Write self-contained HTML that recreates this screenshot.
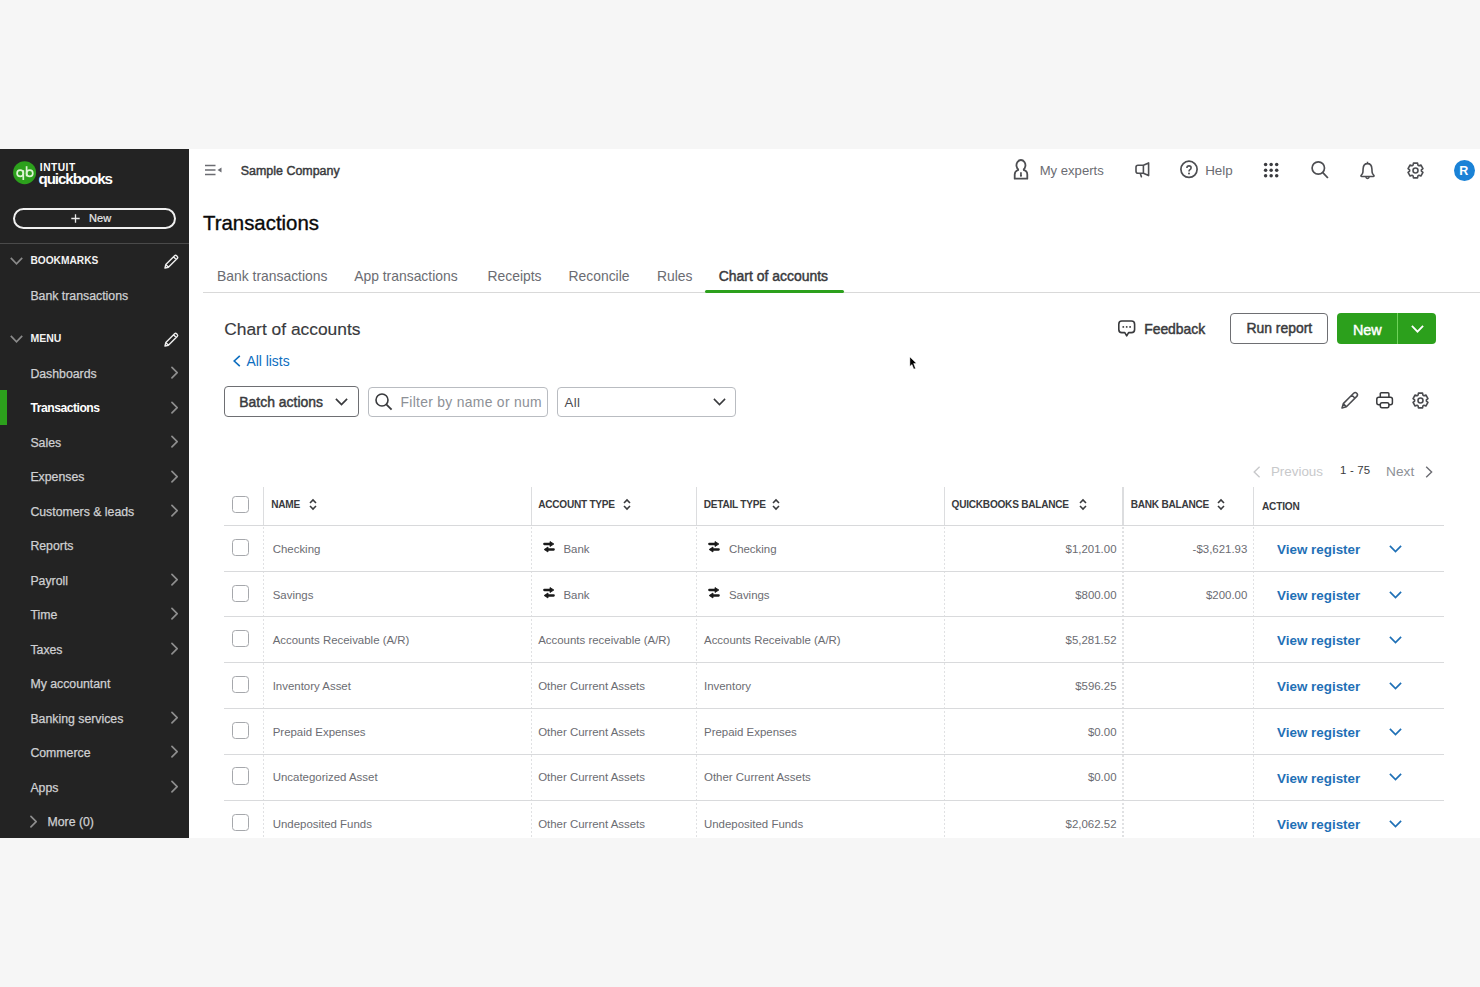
<!DOCTYPE html><html><head><meta charset="utf-8"><style>
*{margin:0;padding:0;box-sizing:border-box}
html,body{width:1480px;height:987px;overflow:hidden;background:#f6f6f6;font-family:"Liberation Sans",sans-serif}
.a{position:absolute;white-space:nowrap}
svg{position:absolute;overflow:visible}
</style></head><body>
<div class="a" style="left:0;top:148.8px;width:1480px;height:689.2px;background:#fff"></div>
<div class="a" style="left:0;top:149px;width:189px;height:689px;background:#232323"></div>
<svg style="left:0;top:0" width="1" height="1"></svg>
<svg style="left:13px;top:161px" width="24" height="24" viewBox="0 0 24 24">
<circle cx="11.6" cy="11.7" r="11.5" fill="#2ca01c"/>
<circle cx="7.2" cy="12.3" r="3.1" fill="none" stroke="#dcf3d2" stroke-width="1.7"/><path d="M10.3 9.3 V19" stroke="#dcf3d2" stroke-width="1.7"/>
<circle cx="16.7" cy="12.3" r="3.1" fill="none" stroke="#dcf3d2" stroke-width="1.7"/><path d="M13.6 5.2 V15.3" stroke="#dcf3d2" stroke-width="1.7"/>
</svg>
<div class="a" style="left:39.80px;top:162.77px;font-size:10.2px;line-height:10.2px;font-weight:700;color:#fff;letter-spacing:0.5px;">INTUIT</div>
<div class="a" style="left:38.50px;top:171.13px;font-size:15.2px;line-height:15.2px;font-weight:700;color:#fff;letter-spacing:-1.1px;">quickbooks</div>
<div class="a" style="left:13px;top:208px;width:163px;height:21px;border:2px solid #f0f0f0;border-radius:11px"></div>
<svg style="left:71px;top:213.8px" width="9" height="9" viewBox="0 0 9 9"><path d="M4.5 0.3V8.7M0.3 4.5H8.7" stroke="#e8e8e8" stroke-width="1.3"/></svg>
<div class="a" style="left:89.00px;top:213.49px;font-size:11px;line-height:11px;font-weight:400;color:#e8e8e8;letter-spacing:0.1px;-webkit-text-stroke:0.2px #e8e8e8;">New</div>
<div class="a" style="left:0;top:242.5px;width:189px;height:1.5px;background:#4a4a4a"></div>
<svg style="left:10.2px;top:257px" width="13" height="8" viewBox="0 0 13 8"><path d="M0.8 0.8 L6.5 6.8 L12.2 0.8" fill="none" stroke="#8a8a8a" stroke-width="1.7"/></svg>
<div class="a" style="left:30.40px;top:255.97px;font-size:10.2px;line-height:10.2px;font-weight:700;color:#f2f2f2;letter-spacing:0px;">BOOKMARKS</div>
<svg style="left:164px;top:253.5px" width="15" height="15" viewBox="0 0 15 15"><path d="M1 14 L1.8 10.6 L10.6 1.8 Q11.6 0.8 12.6 1.8 L13.2 2.4 Q14.2 3.4 13.2 4.4 L4.4 13.2 Z M9.6 2.8 L12.2 5.4 M1.8 10.6 L4.4 13.2" fill="none" stroke="#eee" stroke-width="1.4" stroke-linejoin="round"/></svg>
<div class="a" style="left:30.40px;top:289.89px;font-size:12.3px;line-height:12.3px;font-weight:400;color:#cfd0d2;letter-spacing:0px;-webkit-text-stroke:0.25px #cfd0d2;">Bank transactions</div>
<svg style="left:10.2px;top:335px" width="13" height="8" viewBox="0 0 13 8"><path d="M0.8 0.8 L6.5 6.8 L12.2 0.8" fill="none" stroke="#8a8a8a" stroke-width="1.7"/></svg>
<div class="a" style="left:30.40px;top:333.41px;font-size:10.5px;line-height:10.5px;font-weight:700;color:#f2f2f2;letter-spacing:0px;">MENU</div>
<svg style="left:164px;top:331.5px" width="15" height="15" viewBox="0 0 15 15"><path d="M1 14 L1.8 10.6 L10.6 1.8 Q11.6 0.8 12.6 1.8 L13.2 2.4 Q14.2 3.4 13.2 4.4 L4.4 13.2 Z M9.6 2.8 L12.2 5.4 M1.8 10.6 L4.4 13.2" fill="none" stroke="#eee" stroke-width="1.4" stroke-linejoin="round"/></svg>
<div class="a" style="left:30.40px;top:367.79px;font-size:12.3px;line-height:12.3px;font-weight:400;color:#cfd0d2;letter-spacing:0px;-webkit-text-stroke:0.25px #cfd0d2;">Dashboards</div>
<svg style="left:171.4px;top:366.09999999999997px" width="7.5" height="13" viewBox="0 0 8 13"><path d="M1 1 L6.6 6.6 L1 12.2" fill="none" stroke="#8e8e8e" stroke-width="1.8" stroke-linecap="round" stroke-linejoin="round"/></svg>
<div class="a" style="left:0;top:390.3px;width:6.8px;height:34.4px;background:#2ca01c"></div>
<div class="a" style="left:30.40px;top:402.35px;font-size:12.2px;line-height:12.2px;font-weight:700;color:#ffffff;letter-spacing:-0.5px;">Transactions</div>
<svg style="left:171.4px;top:400.58px" width="7.5" height="13" viewBox="0 0 8 13"><path d="M1 1 L6.6 6.6 L1 12.2" fill="none" stroke="#8e8e8e" stroke-width="1.8" stroke-linecap="round" stroke-linejoin="round"/></svg>
<div class="a" style="left:30.40px;top:436.75px;font-size:12.3px;line-height:12.3px;font-weight:400;color:#cfd0d2;letter-spacing:0px;-webkit-text-stroke:0.25px #cfd0d2;">Sales</div>
<svg style="left:171.4px;top:435.05999999999995px" width="7.5" height="13" viewBox="0 0 8 13"><path d="M1 1 L6.6 6.6 L1 12.2" fill="none" stroke="#8e8e8e" stroke-width="1.8" stroke-linecap="round" stroke-linejoin="round"/></svg>
<div class="a" style="left:30.40px;top:471.23px;font-size:12.3px;line-height:12.3px;font-weight:400;color:#cfd0d2;letter-spacing:0px;-webkit-text-stroke:0.25px #cfd0d2;">Expenses</div>
<svg style="left:171.4px;top:469.53999999999996px" width="7.5" height="13" viewBox="0 0 8 13"><path d="M1 1 L6.6 6.6 L1 12.2" fill="none" stroke="#8e8e8e" stroke-width="1.8" stroke-linecap="round" stroke-linejoin="round"/></svg>
<div class="a" style="left:30.40px;top:505.71px;font-size:12.3px;line-height:12.3px;font-weight:400;color:#cfd0d2;letter-spacing:0px;-webkit-text-stroke:0.25px #cfd0d2;">Customers &amp; leads</div>
<svg style="left:171.4px;top:504.02px" width="7.5" height="13" viewBox="0 0 8 13"><path d="M1 1 L6.6 6.6 L1 12.2" fill="none" stroke="#8e8e8e" stroke-width="1.8" stroke-linecap="round" stroke-linejoin="round"/></svg>
<div class="a" style="left:30.40px;top:540.19px;font-size:12.3px;line-height:12.3px;font-weight:400;color:#cfd0d2;letter-spacing:0px;-webkit-text-stroke:0.25px #cfd0d2;">Reports</div>
<div class="a" style="left:30.40px;top:574.67px;font-size:12.3px;line-height:12.3px;font-weight:400;color:#cfd0d2;letter-spacing:0px;-webkit-text-stroke:0.25px #cfd0d2;">Payroll</div>
<svg style="left:171.4px;top:572.9799999999999px" width="7.5" height="13" viewBox="0 0 8 13"><path d="M1 1 L6.6 6.6 L1 12.2" fill="none" stroke="#8e8e8e" stroke-width="1.8" stroke-linecap="round" stroke-linejoin="round"/></svg>
<div class="a" style="left:30.40px;top:609.15px;font-size:12.3px;line-height:12.3px;font-weight:400;color:#cfd0d2;letter-spacing:0px;-webkit-text-stroke:0.25px #cfd0d2;">Time</div>
<svg style="left:171.4px;top:607.4599999999999px" width="7.5" height="13" viewBox="0 0 8 13"><path d="M1 1 L6.6 6.6 L1 12.2" fill="none" stroke="#8e8e8e" stroke-width="1.8" stroke-linecap="round" stroke-linejoin="round"/></svg>
<div class="a" style="left:30.40px;top:643.63px;font-size:12.3px;line-height:12.3px;font-weight:400;color:#cfd0d2;letter-spacing:0px;-webkit-text-stroke:0.25px #cfd0d2;">Taxes</div>
<svg style="left:171.4px;top:641.9399999999999px" width="7.5" height="13" viewBox="0 0 8 13"><path d="M1 1 L6.6 6.6 L1 12.2" fill="none" stroke="#8e8e8e" stroke-width="1.8" stroke-linecap="round" stroke-linejoin="round"/></svg>
<div class="a" style="left:30.40px;top:678.11px;font-size:12.3px;line-height:12.3px;font-weight:400;color:#cfd0d2;letter-spacing:0px;-webkit-text-stroke:0.25px #cfd0d2;">My accountant</div>
<div class="a" style="left:30.40px;top:712.59px;font-size:12.3px;line-height:12.3px;font-weight:400;color:#cfd0d2;letter-spacing:0px;-webkit-text-stroke:0.25px #cfd0d2;">Banking services</div>
<svg style="left:171.4px;top:710.9px" width="7.5" height="13" viewBox="0 0 8 13"><path d="M1 1 L6.6 6.6 L1 12.2" fill="none" stroke="#8e8e8e" stroke-width="1.8" stroke-linecap="round" stroke-linejoin="round"/></svg>
<div class="a" style="left:30.40px;top:747.07px;font-size:12.3px;line-height:12.3px;font-weight:400;color:#cfd0d2;letter-spacing:0px;-webkit-text-stroke:0.25px #cfd0d2;">Commerce</div>
<svg style="left:171.4px;top:745.38px" width="7.5" height="13" viewBox="0 0 8 13"><path d="M1 1 L6.6 6.6 L1 12.2" fill="none" stroke="#8e8e8e" stroke-width="1.8" stroke-linecap="round" stroke-linejoin="round"/></svg>
<div class="a" style="left:30.40px;top:781.55px;font-size:12.3px;line-height:12.3px;font-weight:400;color:#cfd0d2;letter-spacing:0px;-webkit-text-stroke:0.25px #cfd0d2;">Apps</div>
<svg style="left:171.4px;top:779.86px" width="7.5" height="13" viewBox="0 0 8 13"><path d="M1 1 L6.6 6.6 L1 12.2" fill="none" stroke="#8e8e8e" stroke-width="1.8" stroke-linecap="round" stroke-linejoin="round"/></svg>
<svg style="left:30.2px;top:815.3px" width="7.5" height="13" viewBox="0 0 8 13"><path d="M1 1 L6.6 6.6 L1 12.2" fill="none" stroke="#8e8e8e" stroke-width="1.8" stroke-linecap="round" stroke-linejoin="round"/></svg>
<div class="a" style="left:47.50px;top:815.99px;font-size:12.3px;line-height:12.3px;font-weight:400;color:#cfd0d2;letter-spacing:0px;-webkit-text-stroke:0.25px #cfd0d2;">More (0)</div>
<svg style="left:205px;top:164px" width="17" height="13" viewBox="0 0 17 13">
<path d="M0 1.5H10.5M0 6H10.5M0 10.5H10.5" stroke="#6b6c72" stroke-width="1.6"/>
<path d="M16.5 3.5 L12.5 6 L16.5 8.5 Z" fill="#6b6c72"/></svg>
<div class="a" style="left:240.80px;top:164.86px;font-size:12.45px;line-height:12.45px;font-weight:400;color:#393a3d;letter-spacing:0px;-webkit-text-stroke:0.45px #393a3d;">Sample Company</div>
<svg style="left:1013px;top:158px" width="16" height="22" viewBox="0 0 16 22">
<path d="M5.7 11.9 A4.5 5.3 0 1 1 10.2 11.9" fill="none" stroke="#4d4e52" stroke-width="1.8"/>
<path d="M5.7 11.9 Q1.7 12.8 1.7 16.4 V20.7 H14.3 V16.4 Q14.3 12.8 10.2 11.9" fill="none" stroke="#4d4e52" stroke-width="1.8" stroke-linejoin="round"/>
<path d="M7.95 14.3 V18.6" stroke="#4d4e52" stroke-width="1.7"/><path d="M6.8 17 L7.95 18.9 L9.1 17 Z" fill="#4d4e52"/></svg>
<div class="a" style="left:1039.70px;top:163.91px;font-size:13.1px;line-height:13.1px;font-weight:400;color:#6b6c72;letter-spacing:0px;">My experts</div>
<svg style="left:1135px;top:162px" width="15" height="16" viewBox="0 0 15 16">
<path d="M8.4 3.3 H3 Q1 3.3 1 5.3 V9.2 Q1 11.2 3 11.2 H8.4 Z M8.4 3.3 L13.6 0.9 V13.6 L8.4 11.2 M5.3 11.4 L6.4 14.8" fill="none" stroke="#4d4e52" stroke-width="1.6" stroke-linejoin="round" stroke-linecap="round"/></svg>
<svg style="left:1180px;top:160.5px" width="18" height="18" viewBox="0 0 18 18">
<circle cx="9" cy="8.3" r="8.1" fill="none" stroke="#4d4e52" stroke-width="1.7"/>
<path d="M6.9 7.1 Q6.9 4.9 9 4.9 Q11.1 4.9 11.1 6.8 Q11.1 8 10 8.6 Q9 9.2 9 10.4" fill="none" stroke="#4d4e52" stroke-width="1.6"/>
<circle cx="9" cy="12.4" r="1" fill="#4d4e52"/></svg>
<div class="a" style="left:1205.20px;top:163.66px;font-size:13.4px;line-height:13.4px;font-weight:400;color:#6b6c72;letter-spacing:0px;">Help</div>
<svg style="left:1264px;top:163px" width="15" height="15" viewBox="0 0 15 15"><circle cx="1.60" cy="1.60" r="1.75" fill="#3a3b3f"/><circle cx="7.15" cy="1.60" r="1.75" fill="#3a3b3f"/><circle cx="12.70" cy="1.60" r="1.75" fill="#3a3b3f"/><circle cx="1.60" cy="7.15" r="1.75" fill="#3a3b3f"/><circle cx="7.15" cy="7.15" r="1.75" fill="#3a3b3f"/><circle cx="12.70" cy="7.15" r="1.75" fill="#3a3b3f"/><circle cx="1.60" cy="12.70" r="1.75" fill="#3a3b3f"/><circle cx="7.15" cy="12.70" r="1.75" fill="#3a3b3f"/><circle cx="12.70" cy="12.70" r="1.75" fill="#3a3b3f"/></svg>
<svg style="left:1310.5px;top:160.8px" width="18" height="18" viewBox="0 0 18 18">
<circle cx="7.3" cy="7" r="6.2" fill="none" stroke="#4d4e52" stroke-width="1.7"/>
<path d="M11.6 11.4 L16.9 17" stroke="#4d4e52" stroke-width="1.8"/></svg>
<svg style="left:1360px;top:160.5px" width="16" height="19" viewBox="0 0 16 19">
<path d="M7.5 0.8 V2.6 M7.5 2.6 Q11.6 2.6 11.9 7.8 L12.1 11.2 Q12.3 13.2 13.9 14.3 Q14.4 15.5 13.2 15.5 H1.8 Q0.6 15.5 1.1 14.3 Q2.7 13.2 2.9 11.2 L3.1 7.8 Q3.4 2.6 7.5 2.6 Z" fill="none" stroke="#4d4e52" stroke-width="1.6" stroke-linejoin="round"/>
<path d="M5.7 16.1 Q7.5 19 9.3 16.1" fill="none" stroke="#4d4e52" stroke-width="1.6"/></svg>
<svg style="left:1407.2px;top:161.7px" width="17" height="17" viewBox="0 0 17 17"><path d="M6.09 3.11 L6.45 1.08 L10.55 1.08 L10.91 3.11 L11.96 3.72 L13.90 3.01 L15.95 6.57 L14.37 7.89 L14.37 9.11 L15.95 10.43 L13.90 13.99 L11.96 13.28 L10.91 13.89 L10.55 15.92 L6.45 15.92 L6.09 13.89 L5.04 13.28 L3.10 13.99 L1.05 10.43 L2.63 9.11 L2.63 7.89 L1.05 6.57 L3.10 3.01 L5.04 3.72 Z" fill="none" stroke="#4d4e52" stroke-width="1.6" stroke-linejoin="round"/><circle cx="8.5" cy="8.5" r="2.5" fill="none" stroke="#4d4e52" stroke-width="1.6"/></svg>
<div class="a" style="left:1453.5px;top:159.5px;width:21px;height:21px;border-radius:50%;background:#1a82d6"></div>
<div class="a" style="left:1459.20px;top:164.92px;font-size:12.5px;line-height:12.5px;font-weight:700;color:#fff;letter-spacing:0px;">R</div>
<div class="a" style="left:203.00px;top:213.13px;font-size:20.4px;line-height:20.4px;font-weight:400;color:#0a0a0a;letter-spacing:0px;-webkit-text-stroke:0.35px #0a0a0a;">Transactions</div>
<div class="a" style="left:203px;top:291.5px;width:1277px;height:1.5px;background:#d9d9d9"></div>
<div class="a" style="left:217.00px;top:270.43px;font-size:13.9px;line-height:13.9px;font-weight:400;color:#6b6c72;letter-spacing:0px;">Bank transactions</div>
<div class="a" style="left:354.20px;top:270.43px;font-size:13.9px;line-height:13.9px;font-weight:400;color:#6b6c72;letter-spacing:0px;">App transactions</div>
<div class="a" style="left:487.50px;top:270.43px;font-size:13.9px;line-height:13.9px;font-weight:400;color:#6b6c72;letter-spacing:0px;">Receipts</div>
<div class="a" style="left:568.50px;top:270.43px;font-size:13.9px;line-height:13.9px;font-weight:400;color:#6b6c72;letter-spacing:0px;">Reconcile</div>
<div class="a" style="left:657.00px;top:270.43px;font-size:13.9px;line-height:13.9px;font-weight:400;color:#6b6c72;letter-spacing:0px;">Rules</div>
<div class="a" style="left:718.80px;top:269.59px;font-size:13.95px;line-height:13.95px;font-weight:400;color:#393a3d;letter-spacing:0px;-webkit-text-stroke:0.45px currentColor;">Chart of accounts</div>
<div class="a" style="left:705px;top:290px;width:138.5px;height:3px;background:#2ca01c;border-radius:1.5px"></div>
<div class="a" style="left:224.20px;top:321.17px;font-size:17.4px;line-height:17.4px;font-weight:400;color:#393a3d;letter-spacing:0px;-webkit-text-stroke:0.15px #393a3d;">Chart of accounts</div>
<svg style="left:233px;top:355px" width="8" height="12" viewBox="0 0 8 12"><path d="M6.8 0.8 L1.2 6 L6.8 11.2" fill="none" stroke="#0d6ebf" stroke-width="1.6"/></svg>
<div class="a" style="left:246.40px;top:355.43px;font-size:13.9px;line-height:13.9px;font-weight:400;color:#0d6ebf;letter-spacing:0px;">All lists</div>
<svg style="left:1117.5px;top:319.5px" width="18" height="18" viewBox="0 0 18 18">
<path d="M3.8 1 H13.4 Q16.6 1 16.6 4.2 V9.4 Q16.6 12.6 13.4 12.6 H10.6 L8.7 15.9 L6.8 12.6 H3.8 Q0.8 12.6 0.8 9.4 V4.2 Q0.8 1 3.8 1 Z" fill="none" stroke="#393a3d" stroke-width="1.6" stroke-linejoin="round"/>
<circle cx="5.3" cy="6.9" r="0.95" fill="#393a3d"/><circle cx="8.7" cy="6.9" r="0.95" fill="#393a3d"/><circle cx="12.1" cy="6.9" r="0.95" fill="#393a3d"/></svg>
<div class="a" style="left:1144.20px;top:322.53px;font-size:13.9px;line-height:13.9px;font-weight:400;color:#393a3d;letter-spacing:0px;-webkit-text-stroke:0.45px currentColor;">Feedback</div>
<div class="a" style="left:1230.4px;top:313.4px;width:97.6px;height:30.4px;border:1.8px solid #6e6f73;border-radius:4px"></div>
<div class="a" style="left:1246.40px;top:322.49px;font-size:13.95px;line-height:13.95px;font-weight:400;color:#393a3d;letter-spacing:0px;-webkit-text-stroke:0.45px currentColor;">Run report</div>
<div class="a" style="left:1337.3px;top:313.2px;width:98.5px;height:30.8px;background:#2ca01c;border-radius:4px"></div>
<div class="a" style="left:1397.2px;top:313.2px;width:1px;height:30.8px;background:#6fd35a"></div>
<div class="a" style="left:1352.90px;top:322.81px;font-size:14.4px;line-height:14.4px;font-weight:400;color:#fff;letter-spacing:0px;-webkit-text-stroke:0.45px currentColor;">New</div>
<svg style="left:1410.5px;top:324.5px" width="13" height="8" viewBox="0 0 13 8"><path d="M0.9 0.9 L6.5 6.6 L12.1 0.9" fill="none" stroke="#fff" stroke-width="1.8"/></svg>
<div class="a" style="left:224px;top:386.4px;width:135px;height:30.6px;border:1.8px solid #6e6f73;border-radius:4px"></div>
<div class="a" style="left:239.30px;top:396.29px;font-size:13.95px;line-height:13.95px;font-weight:400;color:#393a3d;letter-spacing:0px;-webkit-text-stroke:0.45px currentColor;">Batch actions</div>
<svg style="left:334.5px;top:397.8px" width="13" height="8" viewBox="0 0 13 8"><path d="M0.9 0.9 L6.5 6.6 L12.1 0.9" fill="none" stroke="#393a3d" stroke-width="1.7"/></svg>
<div class="a" style="left:368.4px;top:386.5px;width:179.4px;height:30.7px;border:1.5px solid #b9bcc1;border-radius:4px"></div>
<svg style="left:375px;top:393px" width="18" height="18" viewBox="0 0 18 18">
<circle cx="7" cy="7" r="6" fill="none" stroke="#393a3d" stroke-width="1.6"/>
<path d="M11.3 11.3 L16.6 16.6" stroke="#393a3d" stroke-width="1.8"/></svg>
<div class="a" style="left:400.5px;top:390px;width:141px;height:22px;overflow:hidden">
<div class="a" style="left:0.00px;top:5.63px;font-size:13.9px;line-height:13.9px;font-weight:400;color:#8d9096;letter-spacing:0.3px;">Filter by name or number</div>
</div>
<div class="a" style="left:556.5px;top:386.5px;width:179.3px;height:30.5px;border:1.5px solid #b9bcc1;border-radius:4px"></div>
<div class="a" style="left:564.60px;top:395.83px;font-size:13.2px;line-height:13.2px;font-weight:400;color:#4a4b50;letter-spacing:0.3px;">All</div>
<svg style="left:712.5px;top:397.8px" width="13" height="8" viewBox="0 0 13 8"><path d="M0.9 0.9 L6.5 6.6 L12.1 0.9" fill="none" stroke="#393a3d" stroke-width="1.5"/></svg>
<svg style="left:1341px;top:392px" width="17" height="17" viewBox="0 0 17 17"><path d="M1 16 L2.27 11.61 L12.64 1.24 Q14.2 -0.3 15.76 1.24 Q17.3 2.8 15.76 4.36 L5.39 14.73 Z M10.84 3.04 L13.96 6.16 M2.27 11.61 L5.39 14.73" fill="none" stroke="#4a4b4f" stroke-width="1.5" stroke-linejoin="round"/></svg>
<svg style="left:1375.8px;top:392px" width="18" height="17" viewBox="0 0 18 17">
<path d="M4.3 5.2 V1.8 Q4.3 0.8 5.3 0.8 H11.9 Q12.9 0.8 12.9 1.8 V5.2" fill="none" stroke="#393a3d" stroke-width="1.5"/>
<path d="M4.2 12.8 H2.8 Q0.8 12.8 0.8 10.8 V7.2 Q0.8 5.2 2.8 5.2 H14.4 Q16.4 5.2 16.4 7.2 V10.8 Q16.4 12.8 14.4 12.8 H13" fill="none" stroke="#393a3d" stroke-width="1.5"/>
<path d="M4.3 12.6 Q4.3 10.8 6 10.8 H11.2 Q12.9 10.8 12.9 12.6 V13.8 Q12.9 15.8 11.2 15.8 H6 Q4.3 15.8 4.3 13.8 Z" fill="none" stroke="#393a3d" stroke-width="1.5"/></svg>
<svg style="left:1411.7px;top:391.9px" width="17" height="17" viewBox="0 0 17 17"><path d="M6.09 3.11 L6.45 1.08 L10.55 1.08 L10.91 3.11 L11.96 3.72 L13.90 3.01 L15.95 6.57 L14.37 7.89 L14.37 9.11 L15.95 10.43 L13.90 13.99 L11.96 13.28 L10.91 13.89 L10.55 15.92 L6.45 15.92 L6.09 13.89 L5.04 13.28 L3.10 13.99 L1.05 10.43 L2.63 9.11 L2.63 7.89 L1.05 6.57 L3.10 3.01 L5.04 3.72 Z" fill="none" stroke="#4a4b4f" stroke-width="1.6" stroke-linejoin="round"/><circle cx="8.5" cy="8.5" r="2.5" fill="none" stroke="#4a4b4f" stroke-width="1.6"/></svg>
<svg style="left:1253px;top:466px" width="8" height="12" viewBox="0 0 8 12"><path d="M6.6 0.8 L1.2 6 L6.6 11.2" fill="none" stroke="#c8c9cb" stroke-width="1.4"/></svg>
<div class="a" style="left:1270.90px;top:464.96px;font-size:13.4px;line-height:13.4px;font-weight:400;color:#c8c9cb;letter-spacing:0px;">Previous</div>
<div class="a" style="left:1340.00px;top:465.25px;font-size:11.4px;line-height:11.4px;font-weight:400;color:#393a3d;letter-spacing:0.2px;">1 - 75</div>
<div class="a" style="left:1386.10px;top:464.70px;font-size:13.7px;line-height:13.7px;font-weight:400;color:#8d9096;letter-spacing:0px;">Next</div>
<svg style="left:1425px;top:466px" width="8" height="12" viewBox="0 0 8 12"><path d="M1.2 0.8 L6.6 6 L1.2 11.2" fill="none" stroke="#6b6c72" stroke-width="1.4"/></svg>
<div class="a" style="left:263.00px;top:486.7px;width:1.3px;height:38.5px;background:#dcdddf"></div>
<div class="a" style="left:530.60px;top:486.7px;width:1.3px;height:38.5px;background:#dcdddf"></div>
<div class="a" style="left:695.80px;top:486.7px;width:1.3px;height:38.5px;background:#dcdddf"></div>
<div class="a" style="left:943.90px;top:486.7px;width:1.3px;height:38.5px;background:#dcdddf"></div>
<div class="a" style="left:1122.30px;top:486.7px;width:1.3px;height:38.5px;background:#dcdddf"></div>
<div class="a" style="left:1252.70px;top:486.7px;width:1.3px;height:38.5px;background:#dcdddf"></div>
<div class="a" style="left:223.5px;top:524.6px;width:1220.5px;height:1.8px;background:#d8d9db"></div>
<div class="a" style="left:232px;top:496px;width:17.4px;height:17.4px;border:1.8px solid #a6a8ac;border-radius:3.5px"></div>
<div class="a" style="left:271.20px;top:499.55px;font-size:10.1px;line-height:10.1px;font-weight:700;color:#393a3d;letter-spacing:-0.25px;">NAME</div>
<svg style="left:308.7px;top:498.5px" width="8" height="11" viewBox="0 0 8 11"><path d="M1 4 L4 1 L7 4 M1 7 L4 10 L7 7" fill="none" stroke="#393a3d" stroke-width="1.6"/></svg>
<div class="a" style="left:538.20px;top:499.55px;font-size:10.1px;line-height:10.1px;font-weight:700;color:#393a3d;letter-spacing:-0.25px;">ACCOUNT TYPE</div>
<svg style="left:622.7px;top:498.5px" width="8" height="11" viewBox="0 0 8 11"><path d="M1 4 L4 1 L7 4 M1 7 L4 10 L7 7" fill="none" stroke="#393a3d" stroke-width="1.6"/></svg>
<div class="a" style="left:703.80px;top:499.55px;font-size:10.1px;line-height:10.1px;font-weight:700;color:#393a3d;letter-spacing:-0.25px;">DETAIL TYPE</div>
<svg style="left:772px;top:498.5px" width="8" height="11" viewBox="0 0 8 11"><path d="M1 4 L4 1 L7 4 M1 7 L4 10 L7 7" fill="none" stroke="#393a3d" stroke-width="1.6"/></svg>
<div class="a" style="left:951.60px;top:499.55px;font-size:10.1px;line-height:10.1px;font-weight:700;color:#393a3d;letter-spacing:-0.25px;">QUICKBOOKS BALANCE</div>
<svg style="left:1079.4px;top:498.5px" width="8" height="11" viewBox="0 0 8 11"><path d="M1 4 L4 1 L7 4 M1 7 L4 10 L7 7" fill="none" stroke="#393a3d" stroke-width="1.6"/></svg>
<div class="a" style="left:1130.70px;top:499.55px;font-size:10.1px;line-height:10.1px;font-weight:700;color:#393a3d;letter-spacing:-0.25px;">BANK BALANCE</div>
<svg style="left:1216.5px;top:498.5px" width="8" height="11" viewBox="0 0 8 11"><path d="M1 4 L4 1 L7 4 M1 7 L4 10 L7 7" fill="none" stroke="#393a3d" stroke-width="1.6"/></svg>
<div class="a" style="left:1262.00px;top:501.55px;font-size:10.1px;line-height:10.1px;font-weight:700;color:#393a3d;letter-spacing:-0.2px;">ACTION</div>
<div class="a" style="left:263.00px;top:526.6px;width:1.3px;height:312px;background-image:linear-gradient(#e0e1e3 50%, transparent 50%);background-size:1.3px 4px"></div>
<div class="a" style="left:530.60px;top:526.6px;width:1.3px;height:312px;background-image:linear-gradient(#e0e1e3 50%, transparent 50%);background-size:1.3px 4px"></div>
<div class="a" style="left:695.80px;top:526.6px;width:1.3px;height:312px;background-image:linear-gradient(#e0e1e3 50%, transparent 50%);background-size:1.3px 4px"></div>
<div class="a" style="left:943.90px;top:526.6px;width:1.3px;height:312px;background-image:linear-gradient(#e0e1e3 50%, transparent 50%);background-size:1.3px 4px"></div>
<div class="a" style="left:1122.30px;top:526.6px;width:1.3px;height:312px;background-image:linear-gradient(#e0e1e3 50%, transparent 50%);background-size:1.3px 4px"></div>
<div class="a" style="left:1252.70px;top:526.6px;width:1.3px;height:312px;background-image:linear-gradient(#e0e1e3 50%, transparent 50%);background-size:1.3px 4px"></div>
<div class="a" style="left:223.5px;top:571px;width:1220.5px;height:1.2px;background:#d9dadc"></div>
<div class="a" style="left:223.5px;top:616px;width:1220.5px;height:1.2px;background:#d9dadc"></div>
<div class="a" style="left:223.5px;top:662px;width:1220.5px;height:1.2px;background:#d9dadc"></div>
<div class="a" style="left:223.5px;top:708px;width:1220.5px;height:1.2px;background:#d9dadc"></div>
<div class="a" style="left:223.5px;top:754px;width:1220.5px;height:1.2px;background:#d9dadc"></div>
<div class="a" style="left:223.5px;top:800px;width:1220.5px;height:1.2px;background:#d9dadc"></div>
<div class="a" style="left:232px;top:538.60px;width:17.4px;height:17.4px;border:1.8px solid #a6a8ac;border-radius:3.5px"></div>
<div class="a" style="left:272.70px;top:543.51px;font-size:11.45px;line-height:11.45px;font-weight:400;color:#6b6c72;letter-spacing:0px;">Checking</div>
<svg style="left:542.6px;top:540.7px" width="12" height="12" viewBox="0 0 12 12">
<path d="M1.3 3 H8" stroke="#1a1a1a" stroke-width="2.3" stroke-linecap="round"/><path d="M7 0.5 L10.9 3 L7 5.5 Z" fill="#1a1a1a" stroke="#1a1a1a" stroke-width="0.8" stroke-linejoin="round"/>
<path d="M10.7 8.5 H4" stroke="#1a1a1a" stroke-width="2.3" stroke-linecap="round"/><path d="M5 6 L1.1 8.5 L5 11 Z" fill="#1a1a1a" stroke="#1a1a1a" stroke-width="0.8" stroke-linejoin="round"/></svg>
<div class="a" style="left:563.40px;top:543.51px;font-size:11.45px;line-height:11.45px;font-weight:400;color:#6b6c72;letter-spacing:0px;">Bank</div>
<svg style="left:708.2px;top:540.7px" width="12" height="12" viewBox="0 0 12 12">
<path d="M1.3 3 H8" stroke="#1a1a1a" stroke-width="2.3" stroke-linecap="round"/><path d="M7 0.5 L10.9 3 L7 5.5 Z" fill="#1a1a1a" stroke="#1a1a1a" stroke-width="0.8" stroke-linejoin="round"/>
<path d="M10.7 8.5 H4" stroke="#1a1a1a" stroke-width="2.3" stroke-linecap="round"/><path d="M5 6 L1.1 8.5 L5 11 Z" fill="#1a1a1a" stroke="#1a1a1a" stroke-width="0.8" stroke-linejoin="round"/></svg>
<div class="a" style="left:728.90px;top:543.51px;font-size:11.45px;line-height:11.45px;font-weight:400;color:#6b6c72;letter-spacing:0px;">Checking</div>
<div class="a" style="right:363.50px;top:543.51px;font-size:11.45px;line-height:11.45px;color:#6b6c72">$1,201.00</div>
<div class="a" style="right:232.70px;top:543.51px;font-size:11.45px;line-height:11.45px;color:#6b6c72">-$3,621.93</div>
<div class="a" style="left:1277.10px;top:542.76px;font-size:13.4px;line-height:13.4px;font-weight:700;color:#1f70b6;letter-spacing:0px;">View register</div>
<svg style="left:1389px;top:544.60px" width="13" height="8" viewBox="0 0 13 8"><path d="M0.9 0.9 L6.5 6.6 L12.1 0.9" fill="none" stroke="#1f70b6" stroke-width="1.7"/></svg>
<div class="a" style="left:232px;top:584.70px;width:17.4px;height:17.4px;border:1.8px solid #a6a8ac;border-radius:3.5px"></div>
<div class="a" style="left:272.70px;top:589.61px;font-size:11.45px;line-height:11.45px;font-weight:400;color:#6b6c72;letter-spacing:0px;">Savings</div>
<svg style="left:542.6px;top:586.8000000000001px" width="12" height="12" viewBox="0 0 12 12">
<path d="M1.3 3 H8" stroke="#1a1a1a" stroke-width="2.3" stroke-linecap="round"/><path d="M7 0.5 L10.9 3 L7 5.5 Z" fill="#1a1a1a" stroke="#1a1a1a" stroke-width="0.8" stroke-linejoin="round"/>
<path d="M10.7 8.5 H4" stroke="#1a1a1a" stroke-width="2.3" stroke-linecap="round"/><path d="M5 6 L1.1 8.5 L5 11 Z" fill="#1a1a1a" stroke="#1a1a1a" stroke-width="0.8" stroke-linejoin="round"/></svg>
<div class="a" style="left:563.40px;top:589.61px;font-size:11.45px;line-height:11.45px;font-weight:400;color:#6b6c72;letter-spacing:0px;">Bank</div>
<svg style="left:708.2px;top:586.8000000000001px" width="12" height="12" viewBox="0 0 12 12">
<path d="M1.3 3 H8" stroke="#1a1a1a" stroke-width="2.3" stroke-linecap="round"/><path d="M7 0.5 L10.9 3 L7 5.5 Z" fill="#1a1a1a" stroke="#1a1a1a" stroke-width="0.8" stroke-linejoin="round"/>
<path d="M10.7 8.5 H4" stroke="#1a1a1a" stroke-width="2.3" stroke-linecap="round"/><path d="M5 6 L1.1 8.5 L5 11 Z" fill="#1a1a1a" stroke="#1a1a1a" stroke-width="0.8" stroke-linejoin="round"/></svg>
<div class="a" style="left:728.90px;top:589.61px;font-size:11.45px;line-height:11.45px;font-weight:400;color:#6b6c72;letter-spacing:0px;">Savings</div>
<div class="a" style="right:363.50px;top:589.61px;font-size:11.45px;line-height:11.45px;color:#6b6c72">$800.00</div>
<div class="a" style="right:232.70px;top:589.61px;font-size:11.45px;line-height:11.45px;color:#6b6c72">$200.00</div>
<div class="a" style="left:1277.10px;top:588.86px;font-size:13.4px;line-height:13.4px;font-weight:700;color:#1f70b6;letter-spacing:0px;">View register</div>
<svg style="left:1389px;top:590.70px" width="13" height="8" viewBox="0 0 13 8"><path d="M0.9 0.9 L6.5 6.6 L12.1 0.9" fill="none" stroke="#1f70b6" stroke-width="1.7"/></svg>
<div class="a" style="left:232px;top:630.00px;width:17.4px;height:17.4px;border:1.8px solid #a6a8ac;border-radius:3.5px"></div>
<div class="a" style="left:272.70px;top:634.91px;font-size:11.45px;line-height:11.45px;font-weight:400;color:#6b6c72;letter-spacing:0px;">Accounts Receivable (A/R)</div>
<div class="a" style="left:538.20px;top:634.91px;font-size:11.45px;line-height:11.45px;font-weight:400;color:#6b6c72;letter-spacing:0px;">Accounts receivable (A/R)</div>
<div class="a" style="left:704.00px;top:634.91px;font-size:11.45px;line-height:11.45px;font-weight:400;color:#6b6c72;letter-spacing:0px;">Accounts Receivable (A/R)</div>
<div class="a" style="right:363.50px;top:634.91px;font-size:11.45px;line-height:11.45px;color:#6b6c72">$5,281.52</div>
<div class="a" style="left:1277.10px;top:634.16px;font-size:13.4px;line-height:13.4px;font-weight:700;color:#1f70b6;letter-spacing:0px;">View register</div>
<svg style="left:1389px;top:636.00px" width="13" height="8" viewBox="0 0 13 8"><path d="M0.9 0.9 L6.5 6.6 L12.1 0.9" fill="none" stroke="#1f70b6" stroke-width="1.7"/></svg>
<div class="a" style="left:232px;top:675.70px;width:17.4px;height:17.4px;border:1.8px solid #a6a8ac;border-radius:3.5px"></div>
<div class="a" style="left:272.70px;top:680.61px;font-size:11.45px;line-height:11.45px;font-weight:400;color:#6b6c72;letter-spacing:0px;">Inventory Asset</div>
<div class="a" style="left:538.20px;top:680.61px;font-size:11.45px;line-height:11.45px;font-weight:400;color:#6b6c72;letter-spacing:0px;">Other Current Assets</div>
<div class="a" style="left:704.00px;top:680.61px;font-size:11.45px;line-height:11.45px;font-weight:400;color:#6b6c72;letter-spacing:0px;">Inventory</div>
<div class="a" style="right:363.50px;top:680.61px;font-size:11.45px;line-height:11.45px;color:#6b6c72">$596.25</div>
<div class="a" style="left:1277.10px;top:679.86px;font-size:13.4px;line-height:13.4px;font-weight:700;color:#1f70b6;letter-spacing:0px;">View register</div>
<svg style="left:1389px;top:681.70px" width="13" height="8" viewBox="0 0 13 8"><path d="M0.9 0.9 L6.5 6.6 L12.1 0.9" fill="none" stroke="#1f70b6" stroke-width="1.7"/></svg>
<div class="a" style="left:232px;top:721.90px;width:17.4px;height:17.4px;border:1.8px solid #a6a8ac;border-radius:3.5px"></div>
<div class="a" style="left:272.70px;top:726.81px;font-size:11.45px;line-height:11.45px;font-weight:400;color:#6b6c72;letter-spacing:0px;">Prepaid Expenses</div>
<div class="a" style="left:538.20px;top:726.81px;font-size:11.45px;line-height:11.45px;font-weight:400;color:#6b6c72;letter-spacing:0px;">Other Current Assets</div>
<div class="a" style="left:704.00px;top:726.81px;font-size:11.45px;line-height:11.45px;font-weight:400;color:#6b6c72;letter-spacing:0px;">Prepaid Expenses</div>
<div class="a" style="right:363.50px;top:726.81px;font-size:11.45px;line-height:11.45px;color:#6b6c72">$0.00</div>
<div class="a" style="left:1277.10px;top:726.06px;font-size:13.4px;line-height:13.4px;font-weight:700;color:#1f70b6;letter-spacing:0px;">View register</div>
<svg style="left:1389px;top:727.90px" width="13" height="8" viewBox="0 0 13 8"><path d="M0.9 0.9 L6.5 6.6 L12.1 0.9" fill="none" stroke="#1f70b6" stroke-width="1.7"/></svg>
<div class="a" style="left:232px;top:767.40px;width:17.4px;height:17.4px;border:1.8px solid #a6a8ac;border-radius:3.5px"></div>
<div class="a" style="left:272.70px;top:772.31px;font-size:11.45px;line-height:11.45px;font-weight:400;color:#6b6c72;letter-spacing:0px;">Uncategorized Asset</div>
<div class="a" style="left:538.20px;top:772.31px;font-size:11.45px;line-height:11.45px;font-weight:400;color:#6b6c72;letter-spacing:0px;">Other Current Assets</div>
<div class="a" style="left:704.00px;top:772.31px;font-size:11.45px;line-height:11.45px;font-weight:400;color:#6b6c72;letter-spacing:0px;">Other Current Assets</div>
<div class="a" style="right:363.50px;top:772.31px;font-size:11.45px;line-height:11.45px;color:#6b6c72">$0.00</div>
<div class="a" style="left:1277.10px;top:771.56px;font-size:13.4px;line-height:13.4px;font-weight:700;color:#1f70b6;letter-spacing:0px;">View register</div>
<svg style="left:1389px;top:773.40px" width="13" height="8" viewBox="0 0 13 8"><path d="M0.9 0.9 L6.5 6.6 L12.1 0.9" fill="none" stroke="#1f70b6" stroke-width="1.7"/></svg>
<div class="a" style="left:232px;top:813.60px;width:17.4px;height:17.4px;border:1.8px solid #a6a8ac;border-radius:3.5px"></div>
<div class="a" style="left:272.70px;top:818.51px;font-size:11.45px;line-height:11.45px;font-weight:400;color:#6b6c72;letter-spacing:0px;">Undeposited Funds</div>
<div class="a" style="left:538.20px;top:818.51px;font-size:11.45px;line-height:11.45px;font-weight:400;color:#6b6c72;letter-spacing:0px;">Other Current Assets</div>
<div class="a" style="left:704.00px;top:818.51px;font-size:11.45px;line-height:11.45px;font-weight:400;color:#6b6c72;letter-spacing:0px;">Undeposited Funds</div>
<div class="a" style="right:363.50px;top:818.51px;font-size:11.45px;line-height:11.45px;color:#6b6c72">$2,062.52</div>
<div class="a" style="left:1277.10px;top:817.76px;font-size:13.4px;line-height:13.4px;font-weight:700;color:#1f70b6;letter-spacing:0px;">View register</div>
<svg style="left:1389px;top:819.60px" width="13" height="8" viewBox="0 0 13 8"><path d="M0.9 0.9 L6.5 6.6 L12.1 0.9" fill="none" stroke="#1f70b6" stroke-width="1.7"/></svg>
<svg style="left:909px;top:356px" width="9" height="14" viewBox="0 0 9 14">
<path d="M0.9 0.9 L7.3 7.3 L4.6 7.5 L6.5 12.4 L4.8 13.1 L3 8.4 L0.9 10.3 Z" fill="#000" stroke="#fff" stroke-width="0.4"/></svg>
</body></html>
